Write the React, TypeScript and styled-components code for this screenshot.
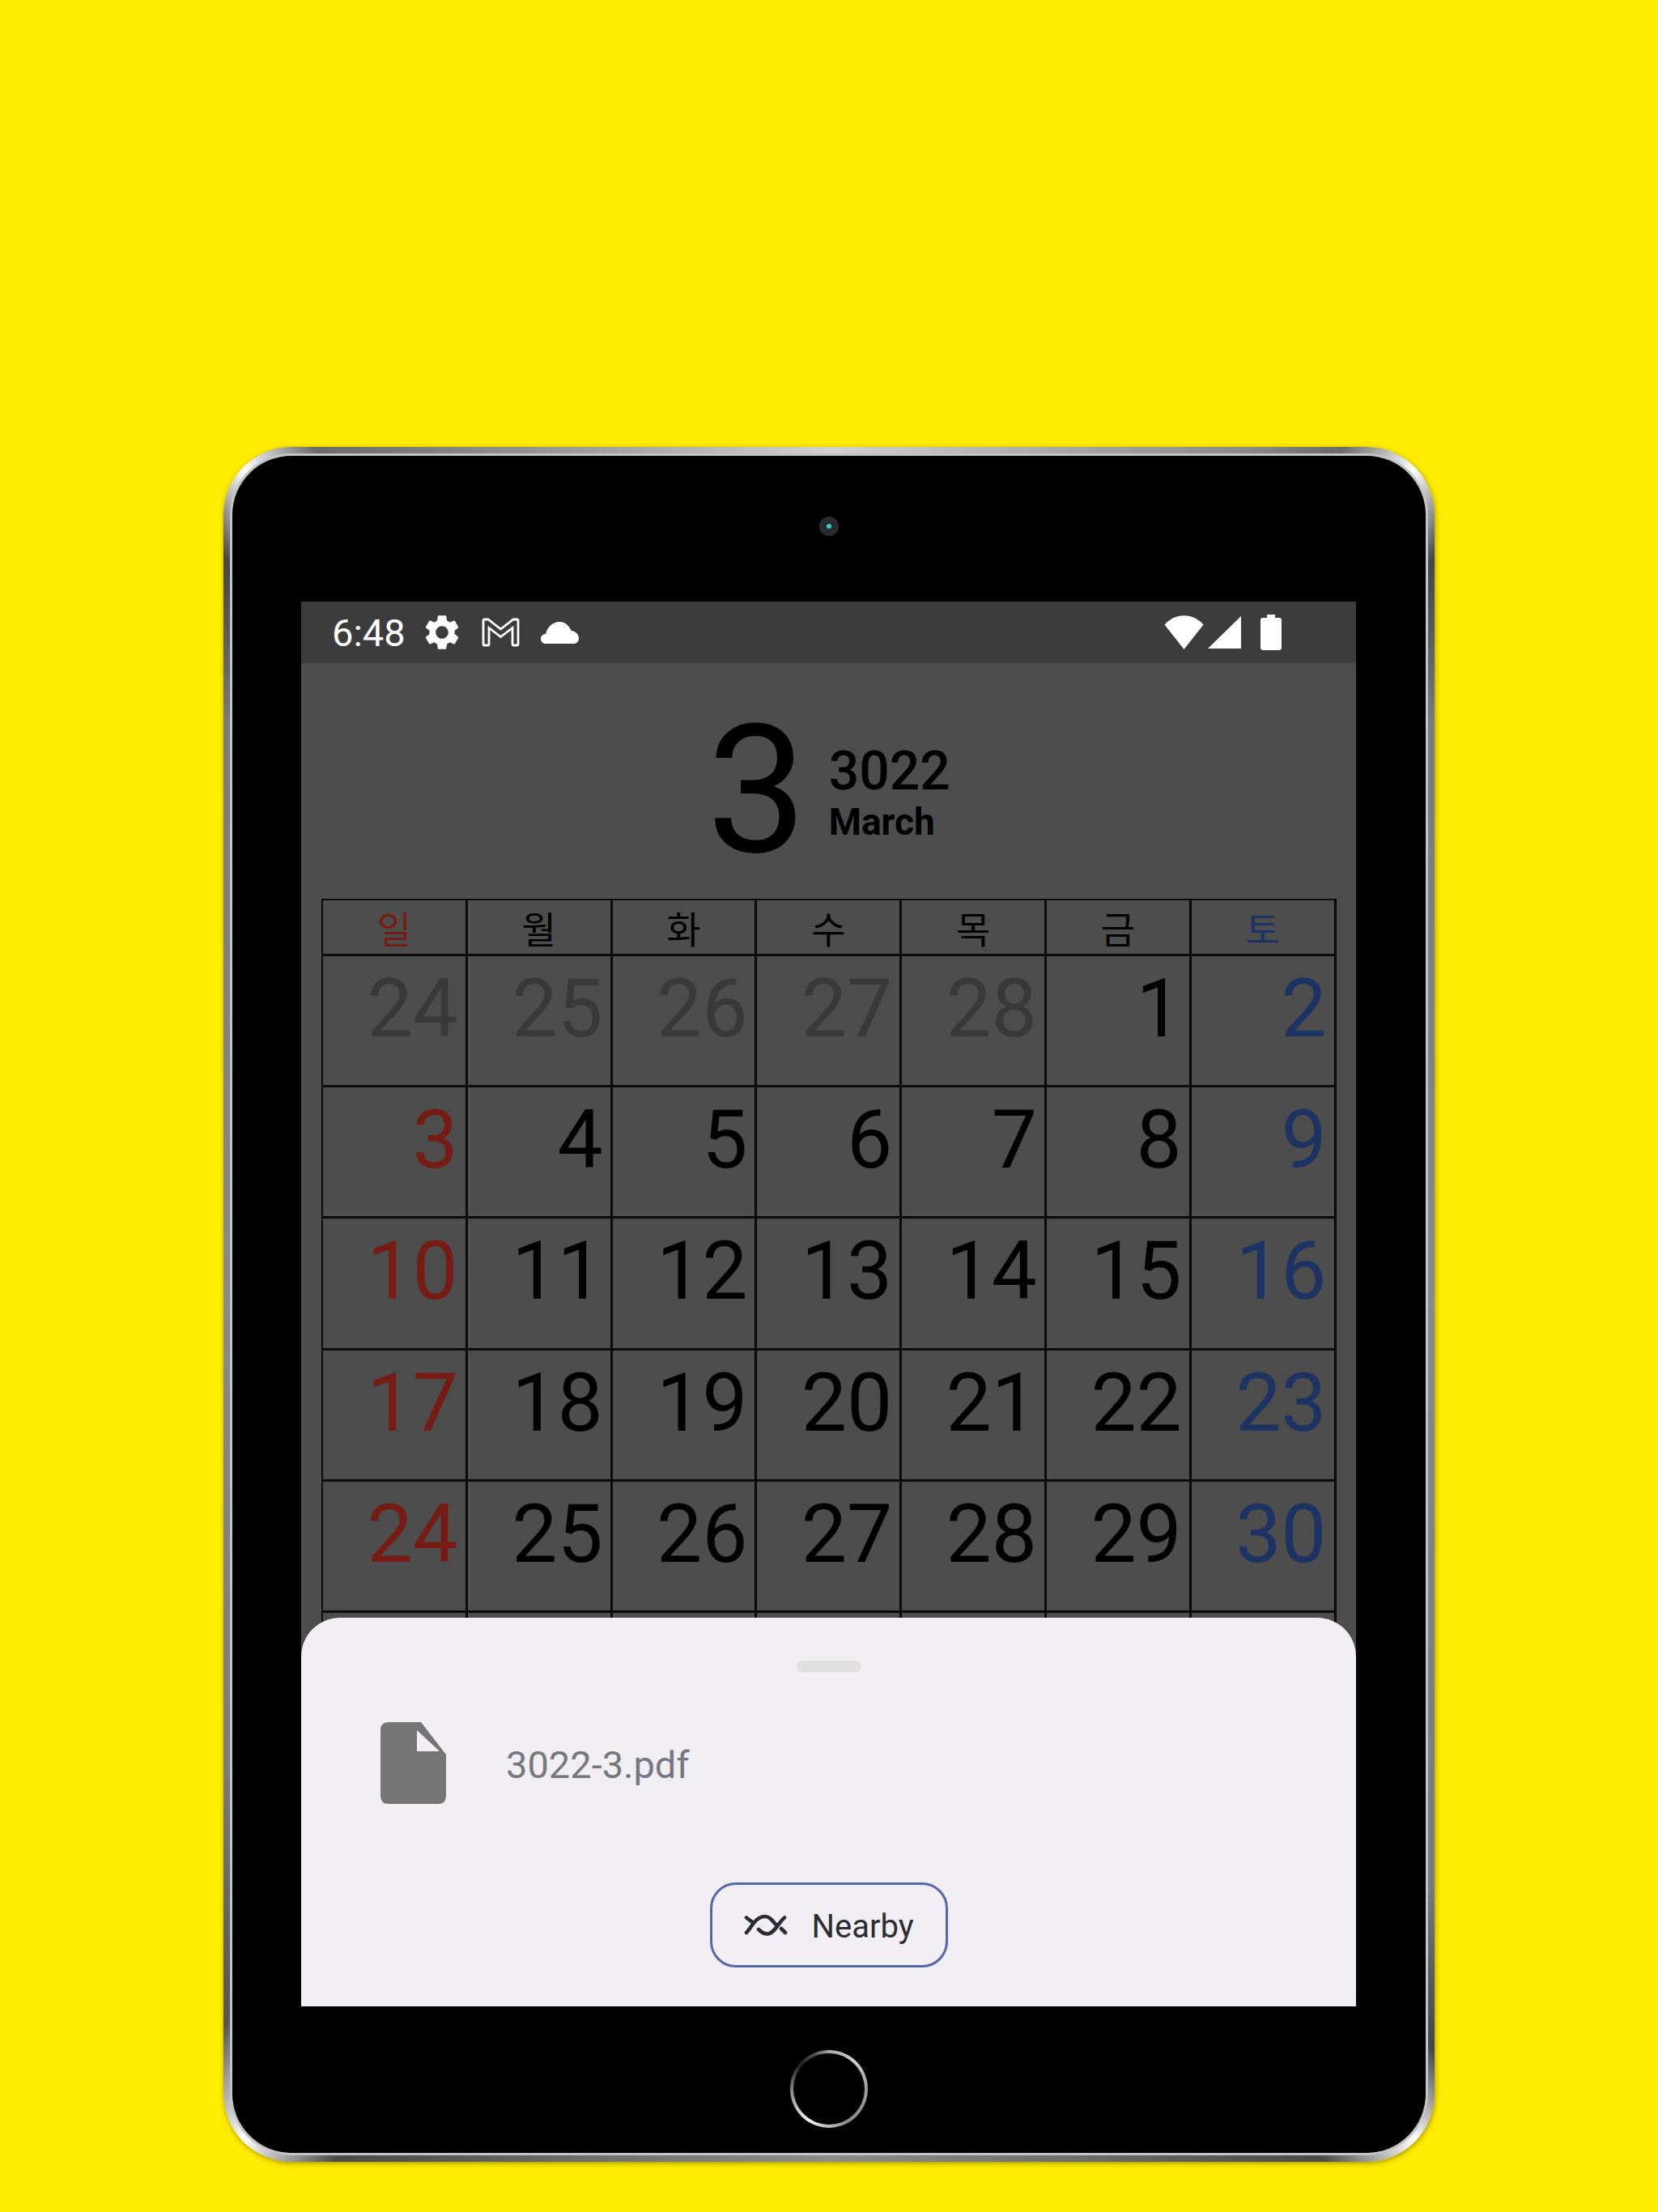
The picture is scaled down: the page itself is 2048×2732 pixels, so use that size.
import styled, { createGlobalStyle } from 'styled-components';

const GlobalStyle = createGlobalStyle`
  html, body {
    margin: 0;
    padding: 0;
    background: #ffec00;
  }
  * {
    box-sizing: border-box;
  }
`;

const Page = styled.div`
  width: 2048px;
  height: 2732px;
  padding-top: 552px;
  padding-left: 276px;
  display: flex;
  background: #ffec00;
  font-family: Roboto, 'Noto Sans CJK KR', sans-serif;
`;

const Frame = styled.div`
  width: 1496px;
  height: 2118px;
  padding: 8px;
  border-radius: 84px;
  box-shadow: 1px 2px 6px rgba(60, 50, 0, 0.45);
  background: conic-gradient(
    #d2d2d2 0deg,
    #8a8a8a 26deg,
    #6a6a6a 31deg,
    #ffffff 35deg,
    #454545 39deg,
    #7a7a7a 46deg,
    #8a8a8a 90deg,
    #7a7a7a 134deg,
    #454545 141deg,
    #ffffff 145deg,
    #4a4a4a 150deg,
    #707070 165deg,
    #8c8c8c 180deg,
    #707070 195deg,
    #4a4a4a 210deg,
    #ffffff 215deg,
    #555555 220deg,
    #7a7a7a 232deg,
    #8a8a8a 270deg,
    #7a7a7a 314deg,
    #454545 321deg,
    #ffffff 325deg,
    #6a6a6a 329deg,
    #7c7c7c 334deg,
    #d2d2d2 360deg
  );
`;

const Bezel = styled.div`
  height: 100%;
  padding: 3px;
  border-radius: 76px;
  background: #c4c4c8;
`;

const Body = styled.div`
  height: 100%;
  border-radius: 73px;
  background: #000;
  display: flex;
  flex-direction: column;
  align-items: center;
`;

const CameraSlot = styled.div`
  height: 180px;
  width: 100%;
  padding-top: 75px;
  display: flex;
  justify-content: center;
  flex: none;
`;

const Camera = styled.div`
  width: 24px;
  height: 24px;
  border-radius: 50%;
  background: #2b2b2b;
  display: flex;
  align-items: center;
  justify-content: center;

  &::after {
    content: '';
    width: 6px;
    height: 6px;
    border-radius: 50%;
    background: #35c3cc;
  }
`;

const Screen = styled.div`
  position: relative;
  width: 1303px;
  height: 1735px;
  margin-right: 1px;
  flex: none;
  overflow: hidden;
  background: #4d4d4d;
`;

const StatusBar = styled.div`
  height: 76px;
  background: #3c3c3c;
  display: flex;
  align-items: center;
  padding: 0 92px 0 38px;
  color: #fff;
`;

const Time = styled.span`
  font-size: 47px;
  line-height: 1;
  margin-right: 19px;
`;

const StatusLeft = styled.div`
  display: flex;
  align-items: center;
  flex: 1;
`;

const StatusRight = styled.div`
  display: flex;
  align-items: center;
`;

const StatusIcon = styled.svg<{ $gap?: number }>`
  display: block;
  fill: #fff;
  margin-right: ${(p) => p.$gap ?? 0}px;
`;

const MonthHeader = styled.div`
  height: 291px;
  display: flex;
  align-items: center;
  padding: 24px 0 0 501px;
  color: #000;
`;

const MonthNumber = styled.div`
  font-size: 220px;
  line-height: 1;
  font-weight: 400;
  margin-right: 27px;
`;

const MonthText = styled.div`
  display: flex;
  flex-direction: column;
  padding-top: 4px;
`;

const YearLabel = styled.div`
  font-size: 66px;
  line-height: 72px;
  font-weight: 500;
`;

const MonthLabel = styled.div`
  font-size: 46px;
  line-height: 52px;
  font-weight: 700;
`;

const Calendar = styled.div`
  width: 1254px;
  margin-left: 25px;
  display: grid;
  grid-template-columns: repeat(7, 178.8px);
  grid-template-rows: 69px repeat(6, 162.2px);
  border-top: 2px solid #0c0c0c;
  border-left: 2px solid #0c0c0c;
`;

type Tone = 'normal' | 'dim' | 'sun' | 'sat';

const toneColor: Record<Tone, string> = {
  normal: '#000000',
  dim: '#393939',
  sun: '#761c15',
  sat: '#1c3364',
};

const WeekCell = styled.div<{ $tone: Tone }>`
  border-right: 3px solid #0a0a0a;
  border-bottom: 3px solid #0a0a0a;
  display: flex;
  align-items: center;
  justify-content: center;
  font-family: 'Noto Sans CJK KR', sans-serif;
  font-size: 46px;
  line-height: 1;
  color: ${(p) => toneColor[p.$tone]};
`;

const DayCell = styled.div<{ $tone: Tone }>`
  border-right: 3px solid #0a0a0a;
  border-bottom: 3px solid #0a0a0a;
  padding: 6px 9px 0 0;
  text-align: right;
  font-size: 100px;
  line-height: 118px;
  color: ${(p) => toneColor[p.$tone]};
`;

const Sheet = styled.div`
  position: absolute;
  left: 0;
  right: 0;
  bottom: 0;
  height: 480px;
  background: #f1eff4;
  border-radius: 48px 48px 0 0;
  display: flex;
  flex-direction: column;
`;

const Handle = styled.div`
  width: 80px;
  height: 14px;
  margin: 53px auto 0;
  border-radius: 7px;
  background: #dfdfdf;
`;

const FileRow = styled.div`
  display: flex;
  align-items: center;
  margin-top: 62px;
  padding-left: 98px;
`;

const FileName = styled.span`
  margin: 4px 0 0 74px;
  font-size: 47px;
  line-height: 1;
  color: #77777f;
`;

const NearbyButton = styled.button`
  align-self: center;
  width: 294px;
  height: 105px;
  margin-top: 97px;
  border: 3px solid #5567a6;
  border-radius: 32px;
  background: transparent;
  display: flex;
  align-items: center;
  padding: 0 0 0 39px;
  font-family: inherit;
  font-size: 40px;
  color: #2c2d33;
`;

const NearbyLabel = styled.span`
  margin: 3px 0 0 30px;
`;

const HomeSlot = styled.div`
  flex: 1;
  width: 100%;
  padding-top: 54px;
  display: flex;
  justify-content: center;
`;

const HomeButton = styled.div`
  width: 96px;
  height: 96px;
  border-radius: 50%;
  padding: 4px;
  background: conic-gradient(#a8a8a8 0deg, #cfcfcf 40deg, #9a9a9a 95deg, #8a8a8a 150deg, #f2f2f2 215deg, #8e8e8e 265deg, #1e1e1e 310deg, #5a5a5a 340deg, #a8a8a8 360deg);

  &::after {
    content: '';
    display: block;
    width: 100%;
    height: 100%;
    border-radius: 50%;
    background: #000;
  }
`;

const weekdays: { label: string; tone: Tone }[] = [
  { label: '일', tone: 'sun' },
  { label: '월', tone: 'normal' },
  { label: '화', tone: 'normal' },
  { label: '수', tone: 'normal' },
  { label: '목', tone: 'normal' },
  { label: '금', tone: 'normal' },
  { label: '토', tone: 'sat' },
];

const days = [24, 25, 26, 27, 28, 1, 2, 3, 4, 5, 6, 7, 8, 9, 10, 11, 12, 13, 14, 15, 16, 17, 18, 19, 20, 21, 22, 23, 24, 25, 26, 27, 28, 29, 30, 31, 1, 2, 3, 4, 5, 6];

function toneFor(index: number): Tone {
  if (index < 5 || index > 35) return 'dim';
  if (index % 7 === 0) return 'sun';
  if (index % 7 === 6) return 'sat';
  return 'normal';
}

export default function App() {
  return (
    <Page>
      <GlobalStyle />
      <Frame>
        <Bezel>
          <Body>
            <CameraSlot>
              <Camera />
            </CameraSlot>
            <Screen>
              <StatusBar>
                <StatusLeft>
                  <Time>6:48</Time>
                  <StatusIcon width="52" height="52" viewBox="0 0 24 24" $gap={23}>
                    <path d="M19.14 12.94c.04-.3.06-.61.06-.94 0-.32-.02-.64-.07-.94l2.03-1.58c.18-.14.23-.41.12-.61l-1.92-3.32c-.12-.22-.37-.29-.59-.22l-2.39.96c-.5-.38-1.03-.7-1.62-.94l-.36-2.54c-.04-.24-.24-.41-.48-.41h-3.84c-.24 0-.43.17-.47.41l-.36 2.54c-.59.24-1.13.57-1.62.94l-2.39-.96c-.22-.08-.47 0-.59.22L2.74 8.87c-.12.21-.08.47.12.61l2.03 1.58c-.05.3-.09.63-.09.94s.02.64.07.94l-2.03 1.58c-.18.14-.23.41-.12.61l1.92 3.32c.12.22.37.29.59.22l2.39-.96c.5.38 1.03.7 1.62.94l.36 2.54c.05.24.24.41.48.41h3.84c.24 0 .44-.17.47-.41l.36-2.54c.59-.24 1.13-.56 1.62-.94l2.39.96c.22.08.47 0 .59-.22l1.92-3.32c.12-.22.07-.47-.12-.61l-2.01-1.58zM12 15.6c-1.98 0-3.6-1.62-3.6-3.6s1.62-3.6 3.6-3.6 3.6 1.62 3.6 3.6-1.62 3.6-3.6 3.6z" />
                  </StatusIcon>
                  <StatusIcon width="47" height="36" viewBox="0 0 47 36" $gap={26}>
                    <path
                      d="M2 3.5 Q2 2 3.5 2 H8 L23.5 14 L39 2 H43.5 Q45 2 45 3.5 V32.5 Q45 34 43.5 34 H39.5 Q38 34 38 32.5 V12.5 L23.5 23.5 L9 12.5 V32.5 Q9 34 7.5 34 H3.5 Q2 34 2 32.5 Z"
                      fill="none"
                      stroke="#fff"
                      strokeWidth="2.8"
                    />
                  </StatusIcon>
                  <StatusIcon width="47" height="27" viewBox="0 0 47 27">
                    <path d="M6 27 C2.5 27 0 24.5 0 21 C0 17.5 2.5 15.2 6 15 C8 6.5 15 0 23 0 C30 0 35 4.5 37.5 11 C43 11.5 47 15.5 47 20.5 C47 24.5 44 27 40.5 27 Z" />
                  </StatusIcon>
                </StatusLeft>
                <StatusRight>
                  <StatusIcon width="49" height="42" viewBox="0 0 49 42" $gap={5}>
                    <path d="M0.5 11.5 C14 -3.5 35 -3.5 48.5 11.5 L24.5 42 Z" />
                  </StatusIcon>
                  <StatusIcon width="41" height="40" viewBox="0 0 41 40" $gap={24}>
                    <path d="M41 0 V40 H0 Z" />
                  </StatusIcon>
                  <StatusIcon width="26" height="44" viewBox="0 0 26 44">
                    <path d="M8 0 H18 V4 H23 Q26 4 26 7 V41 Q26 44 23 44 H3 Q0 44 0 41 V7 Q0 4 3 4 H8 Z" />
                  </StatusIcon>
                </StatusRight>
              </StatusBar>

              <MonthHeader>
                <MonthNumber>3</MonthNumber>
                <MonthText>
                  <YearLabel>3022</YearLabel>
                  <MonthLabel>March</MonthLabel>
                </MonthText>
              </MonthHeader>

              <Calendar>
                {weekdays.map((day) => (
                  <WeekCell key={day.label} $tone={day.tone}>
                    {day.label}
                  </WeekCell>
                ))}
                {days.map((day, i) => (
                  <DayCell key={i} $tone={toneFor(i)}>
                    {day}
                  </DayCell>
                ))}
              </Calendar>

              <Sheet>
                <Handle />
                <FileRow>
                  <svg width="81" height="101" viewBox="0 0 81 101">
                    <path
                      fillRule="evenodd"
                      fill="#757575"
                      d="M10 0 H50 L81 40 V91 Q81 101 71 101 H10 Q0 101 0 91 V10 Q0 0 10 0 Z M45 10 V36 H73 Z"
                    />
                  </svg>
                  <FileName>3022-3.pdf</FileName>
                </FileRow>
                <NearbyButton>
                  <svg width="54" height="28" viewBox="0 0 54 28" fill="none" stroke="#2c2d33" strokeWidth="4.6" strokeLinecap="round">
                    <path d="M3 23 C9 17 14 3 26 3 C33 3 35 9 39 12.5" />
                    <path d="M18 19 C22 23 25 25 30 24.5 C38 23 43 10 50 4.5" />
                    <path d="M3 4.5 L11 10.5" />
                    <path d="M46 18 L51 23" />
                  </svg>
                  <NearbyLabel>Nearby</NearbyLabel>
                </NearbyButton>
              </Sheet>
            </Screen>
            <HomeSlot>
              <HomeButton />
            </HomeSlot>
          </Body>
        </Bezel>
      </Frame>
    </Page>
  );
}
